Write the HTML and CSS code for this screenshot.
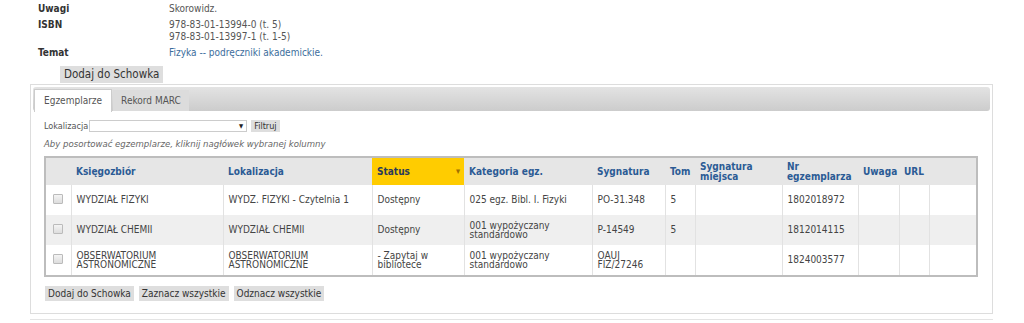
FILE: index.html
```html
<!DOCTYPE html>
<html lang="pl">
<head>
<meta charset="utf-8">
<link rel="stylesheet" href="styles.css">
</head>
<body>
<div class="meta">
  <div class="lbl">Uwagi</div><div class="val">Skorowidz.</div>
  <div class="lbl">ISBN</div><div class="val">978-83-01-13994-0 (t. 5)<br>978-83-01-13997-1 (t. 1-5)</div>
  <div class="lbl">Temat</div><div class="val"><a class="link">Fizyka -- podręczniki akademickie.</a></div>
</div>
<div class="topbtn"><span class="btn big">Dodaj do Schowka</span></div>
<div class="panel">
  <div class="tabbar">
    <span class="tab active">Egzemplarze</span><span class="tab">Rekord MARC</span>
  </div>
  <div class="content">
    <div class="filter">
      <span class="small">Lokalizacja</span>
      <span class="select"><span class="arrow">▼</span></span>
      <span class="btn sm">Filtruj</span>
    </div>
    <div class="hint">Aby posortować egzemplarze, kliknij nagłówek wybranej kolumny</div>
    <table class="items">
      <colgroup>
        <col style="width:26px"><col style="width:152px"><col style="width:149px"><col style="width:92px"><col style="width:128px"><col style="width:73px"><col style="width:30px"><col style="width:87px"><col style="width:76px"><col style="width:41px"><col style="width:30px"><col>
      </colgroup>
      <thead>
        <tr>
          <th></th><th>Księgozbiór</th><th>Lokalizacja</th><th class="sorted">Status<span class="sort">▾</span></th><th>Kategoria egz.</th><th>Sygnatura</th><th>Tom</th><th>Sygnatura miejsca</th><th>Nr egzemplarza</th><th>Uwaga</th><th>URL</th><th></th>
        </tr>
      </thead>
      <tbody>
        <tr>
          <td class="cb"><span class="box"></span></td><td>WYDZIAŁ FIZYKI</td><td>WYDZ. FIZYKI - Czytelnia 1</td><td>Dostępny</td><td>025 egz. Bibl. I. Fizyki</td><td>PO-31.348</td><td>5</td><td></td><td>1802018972</td><td></td><td></td><td></td>
        </tr>
        <tr class="alt">
          <td class="cb"><span class="box"></span></td><td>WYDZIAŁ CHEMII</td><td>WYDZIAŁ CHEMII</td><td>Dostępny</td><td class="tight">001 wypożyczany standardowo</td><td>P-14549</td><td>5</td><td></td><td>1812014115</td><td></td><td></td><td></td>
        </tr>
        <tr>
          <td class="cb"><span class="box"></span></td><td class="tight">OBSERWATORIUM ASTRONOMICZNE</td><td class="tight">OBSERWATORIUM ASTRONOMICZNE</td><td class="tight">- Zapytaj w bibliotece</td><td class="tight">001 wypożyczany standardowo</td><td class="tight">OAUJ FIZ/27246</td><td></td><td></td><td>1824003577</td><td></td><td></td><td></td>
        </tr>
      </tbody>
    </table>
    <div class="actions">
      <span class="btn">Dodaj do Schowka</span>
      <span class="btn">Zaznacz wszystkie</span>
      <span class="btn">Odznacz wszystkie</span>
    </div>
  </div>
</div>
<div class="next"></div>
</body>
</html>
```
FILE: styles.css
```css
html, body { margin: 0; padding: 0; background: #fff; }
body {
  font-family: "DejaVu Sans Condensed", "DejaVu Sans", Verdana, sans-serif;
  font-size: 10px;
  color: #555;
  width: 1024px;
  height: 323px;
  overflow: hidden;
}
.meta {
  display: grid;
  grid-template-columns: 131px auto;
  row-gap: 4px;
  padding: 3px 0 0 38px;
  line-height: 12px;
}
.lbl { font-weight: bold; color: #333; }
.val { color: #555; }
.link { color: #3c6d9c; text-decoration: none; }
.topbtn { padding: 7px 0 0 60px; height: 18px; }
.btn {
  display: inline-block;
  background: #dedede;
  color: #333;
  line-height: 15px;
  padding: 0 3px;
  font-size: 10px;
  white-space: nowrap;
}
.btn.big { font-size: 11.5px; line-height: 17px; padding: 0 4px; }
.btn.sm { font-size: 9px; line-height: 12px; padding: 0 3px; }
.panel {
  margin: 0 0 0 30px;
  width: 957px;
  height: 222px;
  border: 1px solid #ddd;
  padding: 2px 2px 4px 2px;
  box-sizing: content-box;
}
.tabbar {
  height: 22px;
  padding: 2px 0 0 1px;
  background: linear-gradient(#e3e3e3, #cccccc);
  border-radius: 3px;
  display: flex;
  gap: 1px;
  align-items: flex-end;
}
.tab {
  display: inline-block;
  height: 21px;
  line-height: 21px;
  padding: 0 8px;
  font-size: 10px;
  color: #555;
  background: #dcdcdc;
  box-sizing: border-box;
}
.tab.active { background: #fff; height: 23px; margin-bottom: -1px; border: 1px solid #ccc; border-bottom: none; line-height: 21px; padding: 0 9px; }
.content { padding: 9px 0 0 11px; }
.filter { display: flex; align-items: center; gap: 1px; height: 12px; }
.small { font-size: 9px; color: #555; }
.select {
  display: inline-block;
  width: 156px;
  height: 10px;
  border: 1px solid #ccc;
  background: #fff;
  position: relative;
  margin-right: 3px;
}
.arrow { position: absolute; right: 3px; top: 0; font-size: 6px; line-height: 10px; color: #222; }
.hint { font-style: italic; color: #666; font-size: 9.5px; margin-top: 6px; line-height: 12px; }
.items {
  margin-top: 6px;
  width: 934px;
  table-layout: fixed;
  border-collapse: collapse;
  border: 2px solid #bdbdbd;
  font-size: 10px;
  color: #444;
}
.items th {
  background: #e6e6e6;
  color: #2b5b95;
  font-weight: bold;
  text-align: left;
  padding: 0 5px;
  height: 27px;
  line-height: 10px;
  position: relative;
}
.items th.sorted { background: #ffcc00; color: #2a3a5a; }
.sort { position: absolute; right: 4px; top: 8px; color: #a07000; font-size: 9px; }
.items td {
  height: 30px;
  padding: 0 5px;
  border-left: 1px solid #e2e2e2;
  line-height: 10px;
}
.items td:first-child { border-left: none; }
.items td.tight { line-height: 9px; }
.items tr.alt td { background: #efefef; }
.cb { text-align: center; }
.box { display: inline-block; width: 8px; height: 8px; border: 1px solid #bbb; background: linear-gradient(#f4f4f4, #ddd); border-radius: 1px; }
.actions { margin-top: 9px; display: flex; gap: 5px; padding-left: 1px; }
.next { margin: 5px 0 0 30px; width: 963px; border-top: 1px solid #e4e4e4; height: 2px; }
```
